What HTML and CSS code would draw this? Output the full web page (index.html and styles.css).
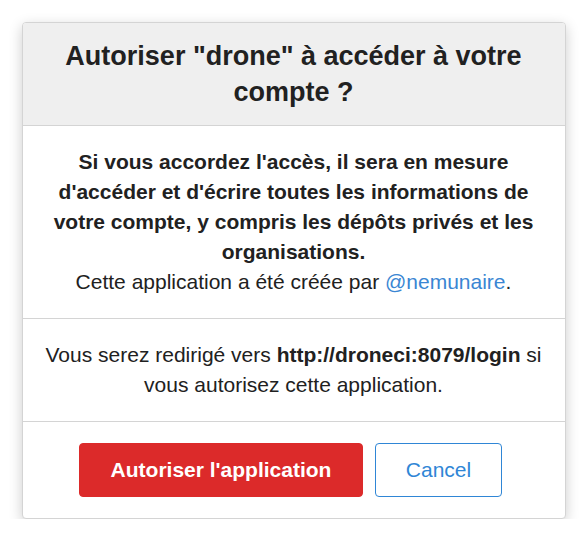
FILE: index.html
```html
<!DOCTYPE html>
<html lang="fr">
<head>
<meta charset="utf-8">
<title>Autoriser drone</title>
<link rel="stylesheet" href="styles.css">
</head>
<body>
<div class="card">
  <div class="card-header">
    <h1 class="title">Autoriser "drone" à accéder à votre compte ?</h1>
  </div>
  <div class="section">
    <p class="warn">Si vous accordez l'accès, il sera en mesure d'accéder et d'écrire toutes les informations de votre compte, y compris les dépôts privés et les organisations.</p>
    <p class="note">Cette application a été créée par <a class="link" href="#">@nemunaire</a>.</p>
  </div>
  <div class="section">
    <p class="note">Vous serez redirigé vers <strong>http://droneci:8079/login</strong> si vous autorisez cette application.</p>
  </div>
  <div class="footer">
    <button class="btn btn-danger">Autoriser l'application</button>
    <button class="btn btn-outline">Cancel</button>
  </div>
</div>
</body>
</html>
```
FILE: styles.css
```css
html, body {
  margin: 0;
  padding: 0;
  background: #ffffff;
}
body {
  font-family: "Liberation Sans", Arial, sans-serif;
  color: #212121;
  padding-top: 22px;
}
.card {
  width: 544px;
  margin: 0 auto;
  box-sizing: border-box;
  border: 1px solid #d4d4d4;
  border-radius: 4px;
  box-shadow: 0 4px 14px rgba(0,0,0,0.2);
  overflow: hidden;
  background: #fff;
}
.card-header {
  background: #efefef;
  border-bottom: 1px solid #d4d4d4;
  padding: 15px 20px 15px;
  text-align: center;
}
.title {
  margin: 0;
  font-size: 27px;
  line-height: 36px;
  font-weight: bold;
}
.section {
  border-bottom: 1px solid #d4d4d4;
  padding: 21px 20px 21px;
  text-align: center;
}
.section p {
  margin: 0;
  font-size: 21px;
  line-height: 30px;
}
.warn {
  font-weight: bold;
}
.link {
  color: #3a86d3;
  text-decoration: none;
}
.footer {
  padding: 21px 26px 21px 20px;
  display: flex;
  justify-content: center;
  gap: 12px;
}
.btn {
  font-family: "Liberation Sans", Arial, sans-serif;
  font-size: 21px;
  height: 54px;
  border-radius: 4px;
  cursor: pointer;
}
.btn-danger {
  background: #dc2a2a;
  border: 1px solid #dc2a2a;
  color: #fff;
  font-weight: bold;
  width: 284px;
}
.btn-outline {
  background: #fff;
  border: 1px solid #2f86d6;
  color: #2f86d6;
  width: 127px;
}
```
